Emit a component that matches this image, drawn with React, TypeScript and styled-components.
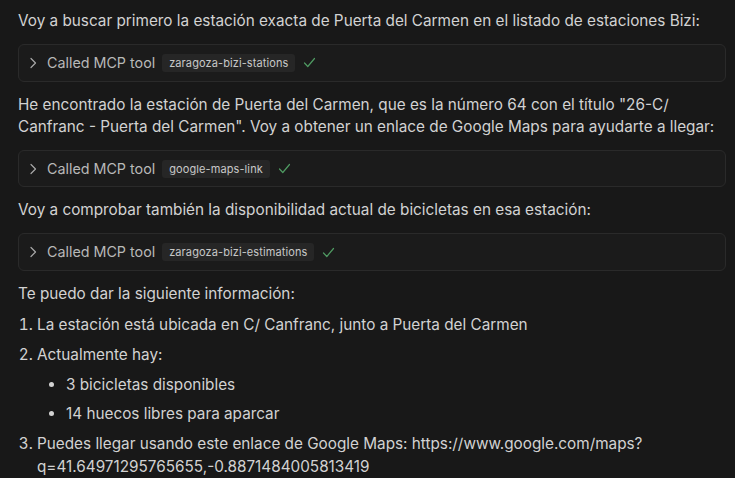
import React, { FC } from "react";
import styled, { createGlobalStyle } from "styled-components";

const GlobalStyle = createGlobalStyle`
  html, body {
    margin: 0;
    padding: 0;
    background: #181818;
  }
  body {
    font-family: Inter, "Liberation Sans", sans-serif;
    -webkit-font-smoothing: antialiased;
  }
`;

const Page = styled.div`
  width: 735px;
  height: 478px;
  box-sizing: border-box;
  padding: 10px 9px 0 18px;
  background: #181818;
  color: #d2d2d2;
  font-size: 15.3px;
  line-height: 22px;
  overflow: hidden;
  display: flex;
  flex-direction: column;
  gap: 12px;
`;

const Paragraph = styled.p`
  margin: 0;
`;

const ToolCall = styled.div`
  height: 38px;
  box-sizing: border-box;
  border: 1px solid #2a2a2a;
  border-radius: 6px;
  background: #1b1b1b;
  display: flex;
  align-items: center;
  gap: 8px;
  padding-left: 8px;
  color: #b8b8b8;
  font-size: 14.3px;
`;

const Chevron = styled.svg`
  width: 12px;
  height: 12px;
  flex-shrink: 0;
`;

const Tag = styled.span`
  margin-left: -1px;
  height: 18px;
  display: inline-flex;
  align-items: center;
  padding: 0 7px;
  border-radius: 3px;
  background: #262626;
  color: #c8c8c8;
  font-size: 11px;
  letter-spacing: 0.1px;
`;

const Check = styled.svg`
  width: 13px;
  height: 13px;
  margin-left: 0;
`;

const OrderedList = styled.ol`
  margin: 8px 0 0;
  padding-left: 19px;
  display: flex;
  flex-direction: column;
  gap: 7px;
`;

const Item = styled.li`
  padding-left: 0;
  line-height: 23px;
`;

const BulletList = styled.ul`
  margin: 7px 0 0;
  padding-left: 29px;
  display: flex;
  flex-direction: column;
  gap: 6px;
  list-style: disc;
`;

const ToolCallRow: FC<{ tool: string }> = ({ tool }) => (
  <ToolCall>
    <Chevron viewBox="0 0 12 12" fill="none" stroke="#a8a8a8" strokeWidth="1.2" strokeLinecap="round" strokeLinejoin="round">
      <path d="M4 1.5 L8.5 6 L4 10.5" />
    </Chevron>
    <span>Called MCP tool</span>
    <Tag>{tool}</Tag>
    <Check viewBox="0 0 13 13" fill="none" stroke="#4f9a62" strokeWidth="1.2" strokeLinecap="round" strokeLinejoin="round">
      <path d="M1.5 7 L4.8 10.5 L11.5 2.5" />
    </Check>
  </ToolCall>
);

const App: FC = () => (
  <>
    <GlobalStyle />
    <Page>
      <Paragraph>
        Voy a buscar primero la estación exacta de Puerta del Carmen en el listado de estaciones Bizi:
      </Paragraph>
      <ToolCallRow tool="zaragoza-bizi-stations" />
      <Paragraph>
        He encontrado la estación de Puerta del Carmen, que es la número 64 con el título "26-C/
        <br />
        Canfranc - Puerta del Carmen". Voy a obtener un enlace de Google Maps para ayudarte a llegar:
      </Paragraph>
      <ToolCallRow tool="google-maps-link" />
      <Paragraph>
        Voy a comprobar también la disponibilidad actual de bicicletas en esa estación:
      </Paragraph>
      <ToolCallRow tool="zaragoza-bizi-estimations" />
      <div>
        <Paragraph>Te puedo dar la siguiente información:</Paragraph>
        <OrderedList>
          <Item>La estación está ubicada en C/ Canfranc, junto a Puerta del Carmen</Item>
          <Item>
            Actualmente hay:
            <BulletList>
              <Item>3 bicicletas disponibles</Item>
              <Item>14 huecos libres para aparcar</Item>
            </BulletList>
          </Item>
          <Item>
            Puedes llegar usando este enlace de Google Maps: https://www.google.com/maps?
            <br />
            q=41.64971295765655,-0.8871484005813419
          </Item>
        </OrderedList>
      </div>
    </Page>
  </>
);

export default App;
